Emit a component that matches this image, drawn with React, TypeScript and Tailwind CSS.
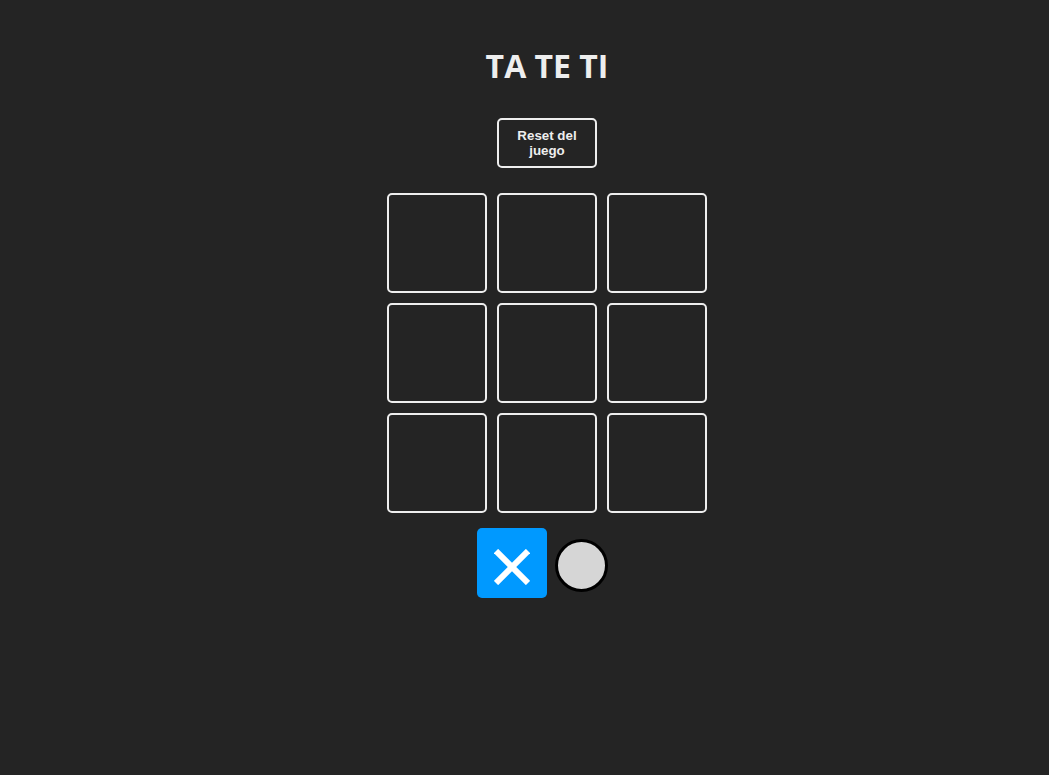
import React from "react";

export default function App() {
  const squares = Array.from({ length: 9 });
  return (
    <div className="min-h-[775px] w-full bg-[#242424] pl-[45px]" style={{ fontFamily: "'Liberation Sans', Arial, sans-serif" }}>
      <main className="mx-auto flex w-fit flex-col items-center pt-[42px]">
        <h1
          className="m-0 text-[32px] font-bold leading-[48px] text-[#eeeeee]"
          style={{ fontFamily: "'Open Sans', sans-serif" }}
        >
          TA TE TI
        </h1>
        <button className="mt-[28px] w-[100px] rounded-[5px] border-2 border-[#eeeeee] bg-transparent px-3 py-2 text-[13.333px] font-bold leading-[15px] text-[#eeeeee]">
          Reset del juego
        </button>
        <section className="mt-[25px] grid grid-cols-3 gap-[10px]">
          {squares.map((_, i) => (
            <div key={i} className="h-[100px] w-[100px] rounded-[5px] border-2 border-[#eeeeee]" />
          ))}
        </section>
        <section className="mt-[15px] mr-[9px] flex items-start gap-[8px]">
          <div className="flex h-[70px] w-[70px] items-center justify-center rounded-[5px] bg-[#0099ff] pt-[7px]">
            <svg width="36" height="36" viewBox="0 0 36 36">
              <line x1="2" y1="2" x2="34" y2="34" stroke="#ffffff" strokeWidth="6" />
              <line x1="34" y1="2" x2="2" y2="34" stroke="#ffffff" strokeWidth="6" />
            </svg>
          </div>
          <div className="mt-[11px] h-[53px] w-[53px] rounded-full border-[3px] border-black bg-[#d6d6d6]" />
        </section>
      </main>
    </div>
  );
}
